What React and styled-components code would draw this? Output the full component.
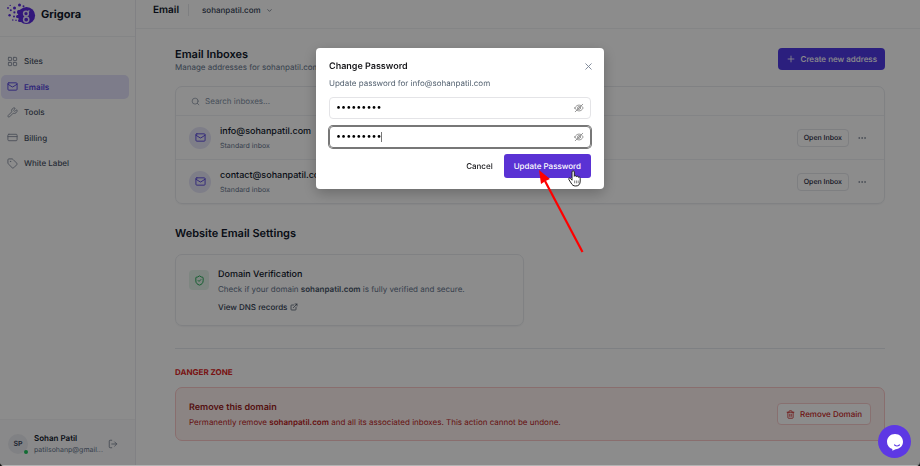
import React, { useState } from "react";
import styled, { createGlobalStyle } from "styled-components";
import {
  ChevronDown,
  CreditCard,
  Ellipsis,
  ExternalLink,
  LayoutGrid,
  LogOut,
  Mail,
  Plus,
  Search,
  ShieldCheck,
  Tag,
  Trash2,
  Wrench,
  X,
} from "lucide-react";

const NAV = [
  { label: "Sites", icon: LayoutGrid },
  { label: "Emails", icon: Mail },
  { label: "Tools", icon: Wrench },
  { label: "Billing", icon: CreditCard },
  { label: "White Label", icon: Tag },
];

const INBOXES = ["info@sohanpatil.com", "contact@sohanpatil.com"];

const Logo = () => (
  <svg width="29" height="23" viewBox="0 0 29 23" fill="#5b2be0" aria-hidden="true">
    <circle cx="19.5" cy="12.5" r="8.6" />
    <rect x="10" y="7" width="5" height="4" rx="1.5" />
    <rect x="9" y="12" width="5" height="3" rx="1.5" />
    <rect x="11" y="16" width="5" height="3" rx="1.5" />
    <circle cx="12.5" cy="1.9" r="1.5" />
    <circle cx="16.5" cy="3.2" r="1" />
    <circle cx="7.5" cy="5" r="1.5" />
    <circle cx="3.2" cy="2.4" r="0.7" />
    <circle cx="1" cy="5" r="0.9" />
    <circle cx="3.8" cy="7.2" r="1" />
    <circle cx="7.4" cy="9.4" r="1.1" />
    <circle cx="2.6" cy="12.3" r="1.2" />
    <circle cx="7" cy="13.6" r="1" />
    <circle cx="5.8" cy="17" r="0.8" />
    <circle cx="9" cy="17.2" r="0.8" />
    <circle cx="19" cy="10.6" r="2.4" fill="none" stroke="#e9e4ff" strokeWidth="1.5" />
    <circle cx="19.2" cy="16.6" r="2.6" fill="none" stroke="#e9e4ff" strokeWidth="1.5" />
    <path d="M20.6 9 L22.4 7.6 M18 13 V14.2" stroke="#e9e4ff" strokeWidth="1.3" />
  </svg>
);

const EyeSlash = () => (
  <svg
    width="10"
    height="10"
    viewBox="0 0 24 24"
    fill="none"
    stroke="#858585"
    strokeWidth="2"
    strokeLinecap="round"
    aria-hidden="true"
  >
    <path d="M2 12 C5 6.5 8.5 5 12 5 C15.5 5 19 6.5 22 12 C19 17.5 15.5 19 12 19 C8.5 19 5 17.5 2 12 Z" />
    <circle cx="12" cy="12" r="3.5" />
    <path d="M3 21 L21 3" />
  </svg>
);

const Arrow = () => (
  <ArrowSvg width="48" height="86" viewBox="0 0 48 86" aria-hidden="true">
    <path d="M45.5 83 L8 12" stroke="#fe0000" strokeWidth="2.2" fill="none" />
    <path d="M2 1 L13 10 L8.5 12 L4 15 Z" fill="#fe0000" />
  </ArrowSvg>
);

const HandCursor = () => (
  <CursorSvg width="13" height="17" viewBox="0 0 13 17" aria-hidden="true">
    <path
      d="M4 10.2 V2 C4 .4 6.3 .4 6.3 2 V6.3 C6.6 5.3 8.3 5.5 8.4 6.7 C8.8 5.8 10.3 6.1 10.4 7.3 C10.9 6.7 12.2 7 12.2 8.3 V11 C12.2 14.2 10.8 16 7.8 16 C5.2 16 4.2 15 3.1 13 L.9 9.6 C.2 8.3 1.6 7.4 2.5 8.4 Z"
      fill="#fff"
      stroke="#222"
      strokeWidth="1"
      strokeLinejoin="round"
    />
    <path d="M6.6 10.5 V13.3 M8.4 10.5 V13.3 M10.2 10.5 V13.3" stroke="#333" strokeWidth=".6" />
  </CursorSvg>
);

const PasswordField = ({ label, value, onChange, focused }) => {
  const [visible, setVisible] = useState(false);
  return (
    <Field $focused={focused}>
      <FieldInput
        type={visible ? "text" : "password"}
        aria-label={label}
        value={value}
        onChange={(e) => onChange(e.target.value)}
      />
      {focused && <Caret />}
      <IconButton type="button" aria-label="Toggle password" onClick={() => setVisible(!visible)}>
        <EyeSlash />
      </IconButton>
    </Field>
  );
};

export default function App() {
  const [password, setPassword] = useState("sohan1234");
  const [confirm, setConfirm] = useState("sohan1234");

  return (
    <>
      <GlobalStyle />
      <Page>
        <Sidebar>
          <Brand>
            <Logo />
            <BrandName>Grigora</BrandName>
          </Brand>
          <Nav>
            {NAV.map(({ label, icon: Icon }) => (
              <NavLink key={label} href="#" $active={label === "Emails"}>
                <Icon size={11} />
                {label}
              </NavLink>
            ))}
          </Nav>
          <UserBox>
            <UserAvatar>
              SP
              <OnlineDot />
            </UserAvatar>
            <UserText>
              <UserName>Sohan Patil</UserName>
              <UserEmail>patilsohanp@gmail...</UserEmail>
            </UserText>
            <IconButton type="button" aria-label="Log out">
              <LogOut size={10} />
            </IconButton>
          </UserBox>
        </Sidebar>

        <Main>
          <TopBar>
            <TopTitle>Email</TopTitle>
            <DomainButton type="button">
              sohanpatil.com
              <ChevronDown size={7} />
            </DomainButton>
          </TopBar>

          <Content>
            <TitleRow>
              <div>
                <Heading>Email Inboxes</Heading>
                <Muted>Manage addresses for sohanpatil.com</Muted>
              </div>
              <PrimaryButton type="button">
                <Plus size={10} />
                Create new address
              </PrimaryButton>
            </TitleRow>

            <InboxCard>
              <SearchRow>
                <Search size={9} />
                <SearchInput type="search" aria-label="Search inboxes" placeholder="Search inboxes..." />
              </SearchRow>
              <InboxList>
                {INBOXES.map((address) => (
                  <InboxRow key={address}>
                    <InboxIcon>
                      <Mail size={11} />
                    </InboxIcon>
                    <InboxText>
                      <InboxAddress>{address}</InboxAddress>
                      <InboxType>Standard inbox</InboxType>
                    </InboxText>
                    <OutlineButton type="button">Open Inbox</OutlineButton>
                    <IconButton type="button" aria-label="More actions">
                      <Ellipsis size={10} />
                    </IconButton>
                  </InboxRow>
                ))}
              </InboxList>
            </InboxCard>

            <SectionHeading>Website Email Settings</SectionHeading>
            <SettingsGrid>
              <SettingCard>
                <ShieldBox>
                  <ShieldCheck size={11} />
                </ShieldBox>
                <div>
                  <CardTitle>Domain Verification</CardTitle>
                  <Muted>
                    Check if your domain <strong>sohanpatil.com</strong> is fully verified and secure.
                  </Muted>
                  <DnsLink href="#">
                    View DNS records
                    <ExternalLink size={8} />
                  </DnsLink>
                </div>
              </SettingCard>
            </SettingsGrid>

            <Divider />
            <DangerLabel>DANGER ZONE</DangerLabel>
            <DangerCard>
              <div>
                <DangerTitle>Remove this domain</DangerTitle>
                <DangerText>
                  Permanently remove <strong>sohanpatil.com</strong> and all its associated inboxes. This action cannot
                  be undone.
                </DangerText>
              </div>
              <DangerButton type="button">
                <Trash2 size={9} />
                Remove Domain
              </DangerButton>
            </DangerCard>
          </Content>
        </Main>
      </Page>

      <Overlay>
        <Modal role="dialog" aria-labelledby="modal-title">
          <ModalHeader>
            <ModalTitle id="modal-title">Change Password</ModalTitle>
            <IconButton type="button" aria-label="Close">
              <X size={11} />
            </IconButton>
          </ModalHeader>
          <ModalText>Update password for info@sohanpatil.com</ModalText>
          <Fields>
            <PasswordField label="New password" value={password} onChange={setPassword} />
            <PasswordField label="Confirm password" value={confirm} onChange={setConfirm} focused />
          </Fields>
          <Actions>
            <CancelButton type="button">Cancel</CancelButton>
            <ButtonWrap>
              <UpdateButton type="button">Update Password</UpdateButton>
              <HandCursor />
              <Arrow />
            </ButtonWrap>
          </Actions>
        </Modal>
      </Overlay>

      <ChatButton type="button" aria-label="Open chat">
        <svg width="18" height="18" viewBox="0 0 18 18" aria-hidden="true">
          <path
            d="M9 1 C13.6 1 17 4.4 17 8.8 C17 13 13.6 16 9.6 16.3 L6.4 17.7 L6.3 16 C3 15 1 12.3 1 8.8 C1 4.4 4.4 1 9 1 Z"
            fill="#fff"
          />
          <path d="M8.6 12 Q11 14 13.4 12" stroke="#5d38e4" strokeWidth="1.2" fill="none" strokeLinecap="round" />
        </svg>
      </ChatButton>
    </>
  );
}

const GlobalStyle = createGlobalStyle`
  * {
    box-sizing: border-box;
  }

  body {
    margin: 0;
    background: #111;
    font-family: Inter, "Liberation Sans", sans-serif;
    font-size: 8px;
    line-height: 12px;
    color: #0f172a;
    text-rendering: geometricPrecision;
  }

  h1, h2, h3, p, ul {
    margin: 0;
    padding: 0;
  }

  button, input {
    font: inherit;
    color: inherit;
    text-rendering: inherit;
  }

  svg {
    flex-shrink: 0;
  }
`;

const Page = styled.div`
  display: flex;
  min-height: 100vh;
  background: #fff;
  border-bottom: 1px solid #b4b4b4;
  border-radius: 0 0 4px 4px;
  overflow: hidden;
`;

const Sidebar = styled.aside`
  display: flex;
  flex-direction: column;
  flex: 0 0 136px;
  min-width: 0;
  border-right: 1px solid #ececf0;
`;

const Brand = styled.div`
  display: flex;
  align-items: center;
  gap: 5px;
  height: 37px;
  padding: 0 7px 8px;
  border-bottom: 1px solid #f1f2f5;
`;

const BrandName = styled.span`
  font-size: 11px;
  font-weight: 700;
`;

const Nav = styled.nav`
  display: flex;
  flex-direction: column;
  justify-content: space-between;
  height: 126px;
  margin-top: 12px;
  padding: 0 6px 0 1px;
`;

const NavLink = styled.a`
  display: flex;
  align-items: center;
  gap: 6px;
  height: 24px;
  padding: 0 6px;
  border-radius: 5px;
  text-decoration: none;
  color: ${({ $active }) => ($active ? "#5443dc" : "#475063")};
  background: ${({ $active }) => ($active ? "#e3e2fb" : "transparent")};
  font-weight: ${({ $active }) => ($active ? 600 : 500)};

  svg {
    color: ${({ $active }) => ($active ? "#5443dc" : "#8b93a3")};
  }
`;

const UserBox = styled.div`
  display: flex;
  align-items: center;
  gap: 6px;
  height: 46px;
  margin-top: auto;
  padding: 3px 17px 0 8px;
  background: #fafafb;
  border-top: 1px solid #f4f4f6;
`;

const UserAvatar = styled.div`
  position: relative;
  display: grid;
  place-items: center;
  flex: 0 0 20px;
  height: 20px;
  border-radius: 50%;
  background: #eaebf0;
  color: #334155;
  font-size: 7px;
  font-weight: 600;
`;

const OnlineDot = styled.span`
  position: absolute;
  right: 0;
  bottom: 0;
  width: 4px;
  height: 4px;
  border-radius: 50%;
  background: #22c55e;
`;

const UserText = styled.div`
  flex: 1;
  min-width: 0;
  line-height: 11px;
  white-space: nowrap;
`;

const UserName = styled.div`
  font-weight: 600;
`;

const UserEmail = styled.div`
  font-size: 7px;
  color: #64748b;
`;

const IconButton = styled.button`
  display: grid;
  place-items: center;
  padding: 0;
  border: 0;
  background: none;
  color: #7a8394;
`;

const Main = styled.main`
  flex: 1;
  min-width: 0;
`;

const TopBar = styled.header`
  display: flex;
  align-items: center;
  gap: 9px;
  height: 29px;
  padding: 0 17px 8px;
  border-bottom: 1px solid #f1f2f5;
`;

const TopTitle = styled.h1`
  font-size: 10px;
  font-weight: 600;
`;

const DomainButton = styled.button`
  display: flex;
  align-items: center;
  gap: 5px;
  padding: 0 0 0 13px;
  border: 0;
  border-left: 1px solid #e6e8ec;
  background: none;
  color: #334155;
  font-weight: 500;
`;

const Content = styled.div`
  padding: 18px 35px 0 39px;
`;

const TitleRow = styled.div`
  display: flex;
  justify-content: space-between;
  align-items: flex-start;
  height: 39px;
`;

const Heading = styled.h2`
  font-size: 11px;
  line-height: 14px;
  font-weight: 600;
`;

const Muted = styled.p`
  color: #64748b;

  strong {
    font-weight: 600;
    color: #475569;
  }
`;

const PrimaryButton = styled.button`
  display: flex;
  align-items: center;
  gap: 5px;
  height: 22px;
  margin-top: 1px;
  padding: 0 8px;
  border: 0;
  border-radius: 4px;
  background: #4f39e6;
  color: #fff;
  font-weight: 500;
`;

const InboxCard = styled.section`
  border: 1px solid #e9ebef;
  border-radius: 7px;
  box-shadow: 0 1px 1px rgba(15, 23, 42, 0.04);
`;

const SearchRow = styled.div`
  display: flex;
  align-items: center;
  gap: 5px;
  height: 28px;
  padding: 0 15px;
  color: #8b95a5;
`;

const SearchInput = styled.input`
  flex: 1;
  padding: 0;
  border: 0;
  outline: 0;
  background: none;

  &::placeholder {
    color: #8291a5;
  }
`;

const InboxList = styled.ul`
  list-style: none;
`;

const InboxRow = styled.li`
  display: flex;
  align-items: center;
  height: 44px;
  padding: 0 17px 0 13px;
  border-top: 1px solid #eff1f4;
`;

const InboxIcon = styled.span`
  display: grid;
  place-items: center;
  width: 22px;
  height: 22px;
  border-radius: 50%;
  background: #e6e5f8;
  color: #5443dc;
`;

const InboxText = styled.div`
  flex: 1;
  margin-left: 9px;
  padding-top: 2px;
`;

const InboxAddress = styled.div`
  font-size: 9px;
  line-height: 14px;
  font-weight: 500;
`;

const InboxType = styled.div`
  font-size: 7px;
  line-height: 13px;
  color: #64748b;
`;

const OutlineButton = styled.button`
  height: 18px;
  margin-right: 8px;
  padding: 0 6px;
  border: 1px solid #e5e7ec;
  border-radius: 4px;
  background: #fff;
  font-size: 7px;
  font-weight: 500;
  color: #1e293b;
`;

const SectionHeading = styled(Heading)`
  margin: 22px 0 14px;
`;

const SettingsGrid = styled.div`
  display: grid;
  grid-template-columns: 1fr 1fr;
  gap: 13px;
`;

const SettingCard = styled.section`
  display: flex;
  gap: 9px;
  height: 72px;
  padding: 13px;
  border: 1px solid #e9ebef;
  border-radius: 7px;
  box-shadow: 0 1px 1px rgba(15, 23, 42, 0.04);
`;

const ShieldBox = styled.span`
  display: grid;
  place-items: center;
  width: 20px;
  height: 20px;
  margin-top: 2px;
  border-radius: 4px;
  background: #e6f5ec;
  color: #16a34a;
`;

const CardTitle = styled.h3`
  margin-bottom: 2px;
  font-size: 9px;
  line-height: 13px;
  font-weight: 500;
`;

const DnsLink = styled.a`
  display: inline-flex;
  align-items: center;
  gap: 3px;
  margin-top: 6px;
  color: #334155;
  font-weight: 500;
  text-decoration: none;
`;

const Divider = styled.hr`
  margin: 22px 0 17px;
  border: 0;
  border-top: 1px solid #e6e9ee;
`;

const DangerLabel = styled.h2`
  margin-bottom: 9px;
  font-size: 8px;
  font-weight: 700;
  color: #dc2626;
`;

const DangerCard = styled.section`
  display: flex;
  justify-content: space-between;
  align-items: center;
  height: 54px;
  padding: 0 13px;
  border: 1px solid #fac8c8;
  border-radius: 7px;
  background: #fef0ef;
`;

const DangerTitle = styled.h3`
  margin-bottom: 2px;
  font-size: 9px;
  line-height: 13px;
  font-weight: 600;
  color: #991b1b;
`;

const DangerText = styled.p`
  color: #b91c1c;

  strong {
    font-weight: 600;
  }
`;

const DangerButton = styled.button`
  display: flex;
  align-items: center;
  gap: 5px;
  height: 22px;
  padding: 0 8px;
  border: 1px solid #f8cdcd;
  border-radius: 4px;
  background: #fff;
  color: #c81e1e;
  font-weight: 500;
`;

const Overlay = styled.div`
  position: fixed;
  inset: 0 0 1px;
  display: flex;
  justify-content: center;
  align-items: flex-start;
  padding-top: 48px;
  background: rgba(0, 0, 0, 0.45);
`;

const Modal = styled.div`
  width: 288px;
  padding: 12px 13px 11px;
  border-radius: 4px;
  background: #fff;
  box-shadow: 0 4px 14px rgba(0, 0, 0, 0.25);
`;

const ModalHeader = styled.div`
  display: flex;
  justify-content: space-between;
  align-items: center;
  height: 13px;
  margin-right: -3px;
`;

const ModalTitle = styled.h2`
  font-size: 9px;
  font-weight: 600;
  color: #18181b;
`;

const ModalText = styled.p`
  margin: 4px 0 8px;
  color: #52606f;
`;

const Fields = styled.div`
  display: flex;
  flex-direction: column;
  gap: 7px;
`;

const Field = styled.div`
  position: relative;
  display: flex;
  align-items: center;
  height: 22px;
  padding: 0 6px;
  border: 1px solid ${({ $focused }) => ($focused ? "#777" : "#e4e4e7")};
  border-radius: 4px;
  box-shadow: ${({ $focused }) => ($focused ? "0 0 0 1px #777" : "none")};
`;

const FieldInput = styled.input`
  flex: 1;
  min-width: 0;
  padding: 0;
  border: 0;
  outline: 0;
  background: none;
  color: #000;
  font-size: 9px;
`;

const Caret = styled.span`
  position: absolute;
  left: 51px;
  width: 1px;
  height: 10px;
  background: #777;
`;

const Actions = styled.div`
  display: flex;
  justify-content: flex-end;
  gap: 11px;
  margin-top: 6px;
`;

const CancelButton = styled.button`
  padding: 0;
  border: 0;
  background: none;
  color: #18181b;
  font-weight: 500;
`;

const ButtonWrap = styled.div`
  position: relative;
`;

const UpdateButton = styled.button`
  height: 24px;
  padding: 0 10px;
  border: 0;
  border-radius: 3px;
  background: #5a32d4;
  color: #fff;
  font-weight: 500;
`;

const CursorSvg = styled.svg`
  position: absolute;
  left: 64px;
  top: 16px;
`;

const ArrowSvg = styled.svg`
  position: absolute;
  left: 33px;
  top: 15px;
`;

const ChatButton = styled.button`
  position: fixed;
  right: 9px;
  bottom: 8px;
  display: grid;
  place-items: center;
  width: 33px;
  height: 33px;
  padding: 0;
  border: 0;
  border-radius: 50%;
  background: #5d38e4;
`;
